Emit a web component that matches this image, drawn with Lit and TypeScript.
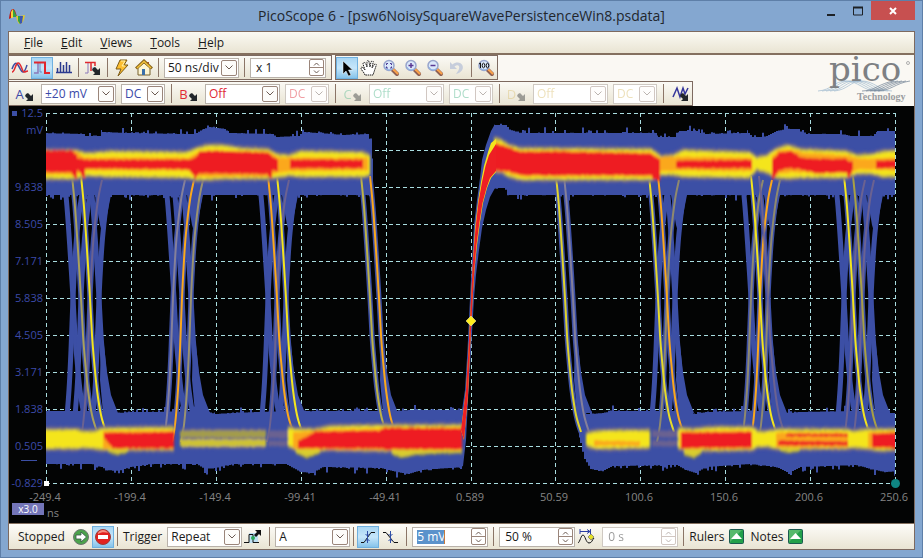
import { LitElement, html, svg, css, nothing } from "lit";
import { customElement } from "lit/decorators.js";
import { classMap } from "lit/directives/class-map.js";

type P = [number, number];
type Span = [number, number, number];

const BLUE = "#3c4fa5";
const MAUVE = "#6b6291";
const OLIVE = "#a9a044";
const YELLOW = "#f4e51d";
const ORANGE = "#fba81c";
const RED = "#ee1f24";

/* ---------- trace geometry ---------- */
const noise = (n: number) => {
  const v = Math.sin(n * 12.9898) * 43758.5453;
  return v - Math.floor(v);
};

const FALL: P[] = [[-12, 152], [-9, 176], [-6, 207], [-3, 250], [0, 298], [2, 335], [4, 360], [7, 390], [11, 415], [16, 432], [22, 441]];
const RISE: P[] = [[-10, 442], [-7, 425], [-4, 390], [-2, 350], [0, 298], [2, 260], [4, 233], [8, 200], [12, 180], [17, 166], [24, 157]];

const smooth = (pts: P[]) => {
  let d = `M${pts[0][0]} ${pts[0][1]}`;
  for (let i = 0; i < pts.length - 1; i++) {
    const a = pts[Math.max(0, i - 1)], b = pts[i], c = pts[i + 1], e = pts[Math.min(pts.length - 1, i + 2)];
    d += `C${b[0] + (c[0] - a[0]) / 6} ${b[1] + (c[1] - a[1]) / 6} ${c[0] - (e[0] - b[0]) / 6} ${c[1] - (e[1] - b[1]) / 6} ${c[0]} ${c[1]}`;
  }
  return d;
};
const edge = (shape: P[], mid: number) => smooth(shape.map(([x, y]) => [x + mid, y] as P));

const falls: [number, string?][] = [
  [73], [81, "#aaa15a"], [90, YELLOW], [99],
  [174], [182], [191],
  [268], [277, ORANGE], [286, YELLOW],
  [370, "#bdb347"], [379, ORANGE],
  [565, "#e0d42c"], [573, "#85809a"],
  [658, "#e6da2a"], [667, ORANGE], [675],
  [751], [760, YELLOW], [768, MAUVE],
  [844], [853, YELLOW], [862, OLIVE], [871],
];
const rises: [number, string?][] = [
  [73], [81], [90, MAUVE], [99],
  [173, "#85809a"], [182, ORANGE], [191, "#9a9270"],
  [268], [277, MAUVE], [286],
  [658], [667, "#8f896e"], [675],
  [751, "#8f896e"], [760, ORANGE], [768, "#8f896e"],
  [844], [853, MAUVE], [862, MAUVE], [871],
];

/* outermost trailing trace of each crossing, where the spread widens into the bands */
const lowerFlares = [99, 191, 286, 379, 573, 675, 768, 871];
const upperFlares = [99, 191, 286, 675, 768, 871];

/* the record runs a little past both ends of the visible area */
const beyond = (x: number) => (x === 46 ? 40 : x === 895 ? 902 : x);

const band = (pts: Span[], jitter: number, seed: number) => {
  const top: string[] = [], bot: string[] = [];
  for (let i = 0; i < pts.length - 1; i++) {
    const [t0, b0] = [pts[i][1], pts[i][2]], [t1, b1] = [pts[i + 1][1], pts[i + 1][2]];
    const x0 = beyond(pts[i][0]), x1 = beyond(pts[i + 1][0]);
    for (let x = x0; x < x1; x += 2) {
      const k = (x - x0) / (x1 - x0);
      const e = Math.min(x + 2, x1);
      const spike = jitter > 2 ? Math.pow(noise(x + seed), 9) * jitter * 2 : noise(x + seed) * jitter;
      const dip = jitter > 2 ? Math.pow(noise(x * 3 + seed), 9) * jitter * 2 : noise(x * 3 + seed) * jitter;
      const t = (t0 + (t1 - t0) * k - spike).toFixed(1), b = (b0 + (b1 - b0) * k + dip).toFixed(1);
      top.push(`${x} ${t}L${e} ${t}`);
      bot.unshift(`${e} ${b}L${x} ${b}`);
    }
  }
  return `M${top.join("L")}L${bot.join("L")}Z`;
};
const grow = (pts: Span[], n: number): Span[] => pts.map(([x, t, b]) => [x, t - n, b + n]);

const blueBands: Span[][] = [
  [[46, 133, 195], [83, 134, 195], [85, 136, 195], [99, 136, 195], [102, 132, 195], [125, 133, 195], [180, 134, 195], [194, 134, 195], [203, 129, 195], [209, 127, 195], [224, 129, 195], [229, 133, 195], [272, 134, 195], [276, 137, 195], [298, 136, 195], [302, 132, 195], [330, 134, 195], [342, 135, 195], [367, 134, 195], [370, 142, 195], [373, 170, 195]],
  [[494, 125, 188], [505, 125, 188], [507, 129, 195], [520, 133, 195], [570, 133, 195], [655, 133, 195], [658, 137, 195], [674, 137, 195], [679, 131, 195], [696, 131, 195], [701, 134, 195], [748, 133, 195], [752, 137, 195], [764, 137, 195], [776, 131, 195], [786, 129, 195], [798, 129, 195], [802, 134, 195], [840, 134, 195], [850, 136, 195], [872, 136, 195], [877, 131, 195], [895, 131, 195]],
  [[46, 411, 464], [92, 411, 464], [101, 411, 467], [106, 411, 470], [118, 413, 471], [130, 412, 467], [150, 412, 464], [196, 411, 464], [204, 411, 469], [215, 414, 468], [232, 413, 464], [285, 411, 464], [300, 413, 472], [312, 411, 473], [322, 411, 467], [380, 411, 468], [396, 411, 472], [408, 410, 474], [420, 410, 470], [462, 410, 467]],
  [[577, 412, 425], [580, 413, 443], [584, 414, 459], [590, 414, 469], [602, 413, 471], [612, 411, 466], [676, 411, 465], [685, 411, 470], [695, 414, 473], [705, 412, 467], [750, 411, 464], [776, 411, 467], [788, 413, 473], [800, 412, 467], [856, 411, 465], [870, 411, 469], [884, 413, 472], [895, 413, 471]],
];

const glowBands: Span[][] = [
  [[46, 152, 177], [75, 152, 177], [85, 155, 174], [110, 153, 175], [185, 154, 176], [196, 150, 178], [206, 147, 178], [222, 147, 177], [240, 150, 177], [267, 151, 177], [276, 156, 176], [288, 157, 174], [300, 153, 175], [362, 154, 175], [370, 158, 173]],
  [[494, 140, 170], [500, 142, 170], [508, 147, 175], [520, 150, 178], [650, 151, 178], [660, 158, 173], [672, 157, 173], [682, 152, 175], [748, 154, 176], [756, 159, 168], [766, 157, 171], [776, 150, 176], [787, 147, 177], [800, 151, 176], [845, 153, 176], [856, 157, 172], [870, 156, 172], [882, 153, 175], [895, 152, 175]],
  [[46, 431, 447], [76, 431, 447], [82, 433, 446], [94, 433, 447], [101, 430, 448], [174, 429, 448]],
  [[288, 429, 445], [295, 431, 448], [315, 431, 449], [330, 428, 448], [380, 427, 449], [392, 427, 449], [462, 427, 449]],
  [[586, 435, 444], [594, 433, 447], [610, 432, 447], [650, 432, 446]],
  [[678, 430, 447], [692, 431, 448], [710, 429, 449], [752, 429, 448], [757, 433, 445], [766, 433, 445], [776, 431, 447], [845, 431, 447], [852, 433, 446], [865, 431, 447], [880, 431, 449], [895, 431, 448]],
];

const tails: Span[][] = [
  [[108, 449, 450], [116, 449, 453], [128, 449, 450]],
  [[296, 449, 452], [306, 449, 456], [320, 449, 451]],
  [[392, 449, 453], [402, 449, 456], [415, 449, 453], [430, 449, 452], [462, 449, 451]],
  [[684, 449, 453], [693, 449, 456], [702, 449, 450]],
  [[780, 448, 449], [788, 448, 451], [800, 448, 449]],
];

const amberBands: Span[][] = [
  [[46, 152, 174], [74, 152, 174], [84, 158, 170], [110, 158, 170], [188, 158, 170], [198, 152, 176], [267, 152, 176], [277, 158, 172], [290, 158, 171], [365, 158, 170], [368, 160, 170]],
  [[494, 142, 170], [508, 148, 173], [520, 152, 176], [556, 151, 176], [650, 153, 176], [658, 158, 171], [680, 157, 170], [752, 158, 171]],
  [[772, 156, 178], [778, 151, 173], [790, 150, 172], [802, 153, 172], [848, 156, 172], [858, 159, 169], [872, 159, 169], [895, 158, 170]],
  [[103, 432, 448], [174, 431, 448]],
  [[293, 433, 448], [330, 430, 449], [462, 428, 449]],
  [[594, 441, 445], [640, 442, 445]],
  [[680, 432, 448], [750, 431, 448]],
  [[776, 433, 447], [848, 433, 447]],
  [[868, 433, 447], [895, 432, 448]],
];

const redBands: Span[][] = [
  [[46, 151, 172], [70, 151, 172], [75, 155, 178], [77, 158, 170], [83, 160, 178], [85, 160, 168], [188, 160, 169], [194, 158, 178], [199, 152, 173], [215, 151, 173], [266, 153, 174], [270, 155, 178], [272, 158, 170], [278, 160, 172]],
  [[290, 160, 168], [363, 160, 168]],
  [[494, 144, 170], [508, 148, 171], [520, 152, 175], [556, 152, 175], [650, 154, 175], [652, 156, 179], [659, 160, 180], [660, 163, 167]],
  [[676, 161, 168], [752, 160, 168]],
  [[772, 159, 179], [778, 153, 170], [790, 151, 168], [800, 158, 169], [815, 159, 173], [845, 159, 172], [848, 161, 177], [853, 162, 168]],
  [[876, 161, 168], [895, 160, 168]],
  [[104, 433, 439], [112, 433, 448], [130, 433, 448], [174, 432, 448]],
  [[298, 441, 448], [315, 432, 448], [378, 431, 448], [384, 428, 449], [462, 429, 449]],
  [[681, 433, 448], [752, 432, 447]],
  [[778, 441, 445], [848, 442, 445]],
  [[786, 434, 436], [848, 434, 436]],
  [[872, 434, 447], [895, 433, 448]],
];

const heatLayers: [string, string][] = [
  ...glowBands.map((b, i): [string, string] => [MAUVE, band(grow(b, 4), 1, i)]),
  ...tails.map((b, i): [string, string] => [OLIVE, band(b.map(([x, t, e]) => [x, t, e + 2] as Span), 1, i + 3)]),
  ...glowBands.map((b, i): [string, string] => [OLIVE, band(grow(b, 2), 1, i + 9)]),
  ...tails.map((b, i): [string, string] => ["#d9cd2e", band(b, 1, i)]),
  ...glowBands.map((b, i): [string, string] => [YELLOW, band(b, 1, i + 20)]),
  ...amberBands.map((b, i): [string, string] => [ORANGE, band(b, 1, i + 31)]),
  ...redBands.map((b, i): [string, string] => [RED, band(b, 1, i + 47)]),
];

const mainEdge: [string, string][] = [
  [BLUE, "M459 430L465 390L467.500 350L470 298L472 260L474 225L477 200L480 178L482 160L486 145L491 131L495 124V188L490 197L486 210L482 228L479 250L476 275L474 298L471 350L468 400L466 440L463 466L459 468Z"],
  [YELLOW, "M461 430L466 390L468.500 350L471 300L473 260L475 228L478 202L481 182L484 166L488 152L491 143L496 139V172L491 178L487 188L483 203L480 222L477 245L474.500 270L472.500 300L470 350L468 395L464 440Z"],
  [RED, "M461 430L466 390L468.500 350L471 300L473 260L475.500 228L478.500 202L482 182L485.500 166L489 155L496 144V171L490 178L486.500 188L482.500 203L479.500 222L476.500 245L474.300 270L472.500 300L470 350L468 395L464 440Z"],
];

const XS = [46, 131, 216, 301, 386, 471, 555, 640, 725, 810, 895];
const YS = Array.from({ length: 11 }, (_, i) => 113 + i * 37);
const X_LABELS = ["-249.4", "-199.4", "-149.4", "-99.41", "-49.41", "0.589", "50.59", "100.6", "150.6", "200.6", "250.6"];
const Y_LABELS = ["12.5", "", "9.838", "8.505", "7.171", "5.838", "4.505", "3.171", "1.838", "0.505", "-0.829"];

@customElement("scope-plot")
class ScopePlot extends LitElement {
  static styles = css`
    :host { display: block; flex: 1; min-height: 0; background: #030404; }
    svg { display: block; width: 100%; height: 100%; }
    .grid { stroke: #a9dde0; stroke-dasharray: 4 3; fill: none; }
    .edge { fill: none; stroke: #3c4fa5; stroke-width: 5; }
    .core { fill: none; stroke-width: 2; }
    .soft { filter: url(#soften); }
    text { font-family: "Open Sans", "Noto Sans", sans-serif; font-size: 11px; }
    .volts { fill: #3c4aa8; text-anchor: end; }
    .time { fill: #858585; text-anchor: middle; }
    .zoom { fill: #ffffff; font-size: 10px; text-anchor: middle; }
  `;
  render() {
    return html`
      <svg viewBox="9 106 905 417" role="img" aria-label="Persistence display">
        <defs>
          <filter id="soften" filterUnits="userSpaceOnUse" x="30" y="100" width="880" height="390"><feGaussianBlur stdDeviation="1 1.4" /></filter>
          <clipPath id="area"><rect x="46" y="106" width="849" height="377" /></clipPath>
        </defs>
        <g class="grid" shape-rendering="crispEdges">
          ${YS.map((y) => svg`<path d="M46 ${y + 0.5}H896" />`)}
          ${XS.map((x) => svg`<path d="M${x + 0.5} 113V484" />`)}
        </g>
        <g clip-path="url(#area)">
          ${falls.map(([m]) => svg`<path class="edge" d=${edge(FALL, m)} />`)}
          ${rises.map(([m]) => svg`<path class="edge" d=${edge(RISE, m)} />`)}
          ${lowerFlares.map((m) => svg`<path fill=${BLUE} d="M${m + 2} 335L${m + 5} 345L${m + 8} 372L${m + 12} 395L${m + 19} 413H${m + 4}L${m + 1} 380Z" />`)}
          ${upperFlares.map((m) => svg`<path fill=${BLUE} d="M${m + 1} 225L${m + 5} 238L${m + 8} 215L${m + 12} 195H${m - 4}Z" />`)}
          ${blueBands.map((b, i) => svg`<path fill=${BLUE} d=${band(b, 3, i * 7)} />`)}
          <path fill=${BLUE} d=${mainEdge[0][1]} />
          ${rises.map(([m, c]) => (c ? svg`<path class="core" stroke=${c} d=${edge(RISE.slice(0, 9), m)} />` : nothing))}
          ${falls.map(([m, c]) => (c ? svg`<path class="core" stroke=${c} d=${edge(FALL.slice(1, 10), m)} />` : nothing))}
          <g class="soft">
            <path fill=${MAUVE} d=${band([[182, 429, 448], [266, 429, 448]], 1, 5)} />
            <path fill="#a39c4c" d=${band([[180, 431, 437], [266, 431, 437]], 1, 5)} />
            <path fill="#cdc235" d=${band([[180, 440, 446], [266, 440, 446]], 1, 6)} />
            <path fill=${MAUVE} d=${band([[268, 431, 438], [290, 431, 438]], 1, 6)} />
            <path fill=${MAUVE} d=${band([[268, 441, 446], [290, 441, 446]], 1, 6)} />
            <path fill=${MAUVE} d=${band([[652, 431, 437], [680, 431, 437]], 1, 6)} />
            <path fill=${MAUVE} d=${band([[652, 441, 446], [680, 441, 446]], 1, 6)} />
            ${heatLayers.map(([c, d]) => svg`<path fill=${c} d=${d} />`)}
          </g>
          ${mainEdge.slice(1).map(([c, d]) => svg`<path fill=${c} d=${d} />`)}
        </g>
        <path d="M471 316L476 321L471 326L466 321Z" fill="#ffee1c" stroke="#fff8b0" stroke-width="0.500" />
        <rect x="12" y="111" width="5" height="5" fill="#3c4fa5" />
        <path d="M21 460.500H37" stroke="#3c4fa5" />
        <rect x="44" y="481" width="5" height="5" fill="#fff" />
        <circle cx="895.500" cy="483.500" r="4.500" fill="#0f8583" />
        ${Y_LABELS.map((t, i) => svg`<text class="volts" x="43" y=${YS[i] + 4}>${t}</text>`)}
        <text class="volts" x="43" y="134">mV</text>
        ${X_LABELS.map((t, i) => svg`<text class="time" x=${XS[i] - 1} y="501">${t}</text>`)}
        <text class="time" x="53" y="517">ns</text>
        <rect x="12" y="503" width="32" height="12" fill="#7375b8" />
        <text class="zoom" x="28" y="513">x3.0</text>
      </svg>`;
  }
}

/* ---------- icons ---------- */
const icon = (w: number, h: number, body: unknown) =>
  html`<svg class="icon" width=${w} height=${h} viewBox="0 0 ${w} ${h}" aria-hidden="true">${body}</svg>`;

const corner = (x: number, y: number) => svg`<path d="M${x} ${y + 1}l2-1 3 3 2-2v7h-7l2-2-3-3z" fill="#22262a" />`;
const magnifier = (glyph: unknown) => icon(18, 18, svg`
  <path d="M11 11L15 15" stroke="#8d5f52" stroke-width="4" stroke-linecap="round" />
  <path d="M11.500 10.500L15.500 14.500" stroke="#fba24a" stroke-width="2" stroke-linecap="round" />
  <circle cx="7" cy="6.500" r="5" fill="#dbe8fa" stroke="#98a5cc" stroke-width="1.500" />
  <path d="M3 8A4.500 4.500 0 0 0 10 10" fill="none" stroke="#8fb4e8" />${glyph}`);

const icons = {
  app: icon(18, 18, svg`
    <path d="M1 10C2 4 3 1 5 1C7 1 8 5 9 9H5L1 11Z" fill="#b91e1e" />
    <path d="M4 2L6 2L9 9H5Z" fill="#35a043" /><path d="M3 4L5 1V10H3Z" fill="#f5d43a" />
    <path d="M8 8H12L17 7C16 13 14 16 12 16C10 16 9 12 8 8Z" fill="#e2c92c" />
    <path d="M12 8L15 8L14 15L12 16Z" fill="#3a55b4" /><path d="M10 8H12V16L10 13Z" fill="#2d9d4c" />`),
  scope: icon(18, 16, svg`
    <path d="M1 9C3 3 5 2 7 5S10 12 12 12S15 8 16 5" fill="none" stroke="#3d4ca2" stroke-width="1.500" />
    <path d="M1 12C4 12 4 4 7 3S11 12 13 12S15 11 17 11" fill="none" stroke="#e0282e" stroke-width="1.500" />`),
  persist: icon(18, 16, svg`
    <path d="M1 13H5V3" fill="none" stroke="#8a79b8" stroke-width="1.500" /><path d="M7 3V12H9" fill="none" stroke="#6a8fc4" />
    <path d="M1 2.500H12V13H17" fill="none" stroke="#e0282e" stroke-width="2" />`),
  spectrum: icon(18, 16, svg`<path d="M1 12.500H17M2.500 12V8M5.500 12V2M8.500 12V5M11.500 12V2M14.500 12V5" stroke="#2b3a8f" stroke-width="1.500" fill="none" />`),
  lens: icon(18, 16, svg`<path d="M7 3V10H12V7H8Z" fill="#b9dcee" /><path d="M1 13H4V3" fill="none" stroke="#8a79b8" /><path d="M1 2.500H11V6M7 3V11" fill="none" stroke="#e0282e" stroke-width="1.500" />${corner(9, 7)}`),
  bolt: icon(16, 18, svg`<path d="M6 1H13L10 6H14L4 17L7 10H2Z" fill="#fdbe2f" stroke="#7b5a16" stroke-linejoin="round" /><path d="M7 2H11L8 7H11" fill="none" stroke="#fff0a8" />`),
  home: icon(18, 18, svg`
    <path d="M12 3V6H14V3Z" fill="#b0502c" /><path d="M3 9V16H15V9L9 4Z" fill="#fdf5d2" stroke="#77602c" />
    <path d="M1 9.500L9 2L17 9.500" fill="none" stroke="#8a661c" stroke-width="3" /><path d="M2 9L9 2.500L16 9" fill="none" stroke="#f4c33c" stroke-width="1.500" />
    <path d="M7 16V10H10V16Z" fill="#3b6fa8" />`),
  pointer: icon(16, 18, svg`<path d="M4 2V15L7 12L9.500 17L12 16L9.500 11H13.500Z" fill="#000" stroke="#fff" stroke-width="0.500" />`),
  hand: icon(18, 18, svg`<path d="M5 16C4 13 1 11 1 9S4 9 5 11L3 5C3 3 5 3 6 5L7 8L7 3C7 1 9 1 9 3L10 8L11 3C12 1 14 2 13 4L12 9L14 6C15 4 17 5 16 7L13 16Z" fill="#fff" stroke="#1a1a1a" stroke-dasharray="1.500 .7" />`),
  zoomBox: magnifier(svg`<path d="M6 4.500H4.500V6M4.500 7.500V9H6M8 4.500H9.500V6M9.500 7.500V9H8" fill="none" stroke="#4a3a94" />`),
  zoomIn: magnifier(svg`<path d="M4.500 6.500H9.500M7 4V9" stroke="#5a3a94" stroke-width="1.500" />`),
  zoomOut: magnifier(svg`<path d="M4.500 6.500H9.500" stroke="#5a3a94" stroke-width="1.500" />`),
  undo: icon(18, 18, svg`<path d="M2 3V10H9L6.500 7.500C10 5 12 7 11 10C10.500 12 9 13 8 15C13 14 16 10 14.500 6.500C13 3 8 2.500 4.500 5.500Z" fill="#c6cddb" />`),
  zoomFull: magnifier(svg`<path d="M2 5L3.500 4V9" fill="none" stroke="#111" /><ellipse cx="6.500" cy="6.500" rx="1.300" ry="2.300" fill="none" stroke="#111" /><ellipse cx="10.500" cy="6.500" rx="1.300" ry="2.300" fill="none" stroke="#111" />`),
  maths: icon(20, 18, svg`<path d="M2 12L6 3L9 12L12 3L14 9L17 3" fill="none" stroke="#33349a" stroke-width="1.500" />${corner(10, 8)}`),
  go: icon(18, 18, svg`<circle cx="9" cy="9" r="7.500" fill="#4ba34c" stroke="#6c7470" /><path d="M4 7H9V4L14.500 9L9 14V11H4Z" fill="#fff" stroke="#37534a" stroke-width="0.800" />`),
  stop: icon(18, 18, svg`<circle cx="9" cy="9" r="7.500" fill="#e2211f" stroke="#9c3c3a" /><path d="M4 5C6 1 12 1 14 5C11 4 7 4 4 6Z" fill="#f58f80" /><rect x="4" y="7" width="10" height="4" fill="#fff" />`),
  advanced: icon(20, 18, svg`<rect x="6" y="5" width="9" height="10" fill="#bfe0f2" /><path d="M1 14.500H6V6.500H10V14.500H16" fill="none" stroke="#111" /><circle cx="10" cy="10" r="2" fill="#2aa95a" /><path d="M11 7L14 4L12 2H18V8L16 6L13 9Z" fill="#111" />`),
  rising: icon(18, 18, svg`<path d="M2 14.500H5L12 4.500H16" fill="none" stroke="#111" /><path d="M8.500 3V15M6.500 6L8.500 8L10.500 6M6.500 13L8.500 11L10.500 13" fill="none" stroke="#2f4ea6" />`),
  falling: icon(18, 18, svg`<path d="M2 4.500H5L13 14.500H17" fill="none" stroke="#111" /><path d="M9.500 3V15M7.500 6L9.500 8L11.500 6M7.500 13L9.500 11L11.500 13" fill="none" stroke="#2f4ea6" />`),
  delay: icon(18, 18, svg`<path d="M1 15C3 14 4 7 6 7S9 15 12 15S15 12 17 10" fill="none" stroke="#111" /><path d="M3 3.500H13M3 1V6M13.500 1V6M10 1.500L13 3.500L10 5.500" fill="none" stroke="#2c3fa4" /><path d="M14 6L17 9L14 12L11 9Z" fill="#e6e224" stroke="#444" stroke-width="0.500" />`),
  up: icon(15, 15, svg`<rect x="0.500" y="0.500" width="14" height="14" rx="1" fill="#23a04b" stroke="#1c5b50" /><path d="M1 1H13L1 13Z" fill="#56b96b" /><path d="M2 10L7.500 4L13 10Z" fill="#fff" />`),
};

@customElement("app-root")
class AppRoot extends LitElement {
  static styles = css`
    :host { display: block; height: 100vh; font: 12px/16px "Open Sans", "Noto Sans", sans-serif; color: #1a1a1a; }
    * { box-sizing: border-box; }
    button, select, input { font: inherit; color: inherit; border: 0; padding: 0; margin: 0; background: none; border-radius: 0; }
    .icon { display: block; flex: none; }
    .window { height: 100%; display: flex; flex-direction: column; background: #84a7d0; border: 1px solid #5e7fa8; padding: 0 7px 7px; }
    .titlebar { height: 30px; display: grid; grid-template-columns: 1fr auto 1fr; align-items: start; }
    .titlebar .icon { margin-top: 7px; }
    .title { margin: 0; font-size: 14px; line-height: 30px; font-weight: 400; color: #22262c; }
    .caption { justify-self: end; display: flex; }
    .caption button { width: 27px; height: 19px; display: flex; justify-content: center; align-items: center; }
    .caption .close { width: 44px; background: #c75050; }
    .client { flex: 1; min-height: 0; display: flex; flex-direction: column; border: 1px solid #7d6a60; background: #faf8f3; }
    .menu { height: 23px; display: flex; align-items: center; gap: 18px; padding: 0 15px; background: linear-gradient(#fbfaf3, #e9e4d3); border-bottom: 2px solid #84705f; }
    .tools { height: 51px; flex: none; display: flex; justify-content: space-between; }
    .rows { display: flex; flex-direction: column; gap: 1px; }
    .row { display: flex; gap: 3px; height: 25px; }
    .bar { display: flex; align-items: center; height: 25px; border: 1px solid #7d6a60; border-left: 0; background: linear-gradient(#fbfaf5, #e9e4d3); }
    .bar + .bar { border-left: 1px solid #7d6a60; }
    .tool { width: 22px; height: 22px; flex: none; display: flex; align-items: center; justify-content: center; }
    .on { background: linear-gradient(#a9d6f3, #c6e6fa 50%, #86c3ea); border: 1px solid #6fb0df; }
    .sep { width: 1px; height: 19px; flex: none; background: #8b7567; margin: 0 5px; }
    .sep.tight { margin: 0 3px; }
    .sep.after { margin: 0 1px 0 6px; }
    .field { display: flex; align-items: center; height: 20px; flex: none; background: #fff; border: 1px solid #b9b2aa; padding-right: 1px; }
    .field select, .field input { flex: 1; min-width: 0; width: 0; height: 18px; padding-left: 3px; appearance: none; outline: none; opacity: 1; }
    .field.wide { width: 75px; }
    .field.spin { width: 76px; }
    .field.spin input { padding-left: 5px; }
    .field.small { width: 44px; }
    .arrow { width: 16px; height: 16px; flex: none; border: 1px solid #9a857a; border-radius: 2px; display: flex; align-items: center; justify-content: center; background: #fdfcfa; pointer-events: none; }
    .steps { width: 15px; height: 17px; flex: none; display: flex; flex-direction: column; border: 1px solid #9a857a; border-radius: 2px; }
    .steps button { flex: 1; display: flex; align-items: center; justify-content: center; }
    .steps button + button { border-top: 1px solid #9a857a; }
    .off { opacity: 0.4; }
    .field.off { opacity: 1; border-color: #cfc9c2; }
    .field.off > * { opacity: 0.45; }
    .chan { width: 32px; flex: none; height: 22px; display: flex; align-items: center; justify-content: center; font-size: 13px; }
    .chan .icon { margin-top: 6px; }
    .gap { width: 5px; flex: none; }
    .gap.slim { width: 2px; }
    .ch-a { color: #3a49a8; } .ch-b { color: #e02a35; } .ch-c { color: #4cb488; } .ch-d { color: #d8bd6a; }
    .logo { flex: none; width: 96px; height: 50px; margin-right: 2px; overflow: visible; }
    .brand { font-family: "DejaVu Serif", serif; font-size: 34px; fill: #7d8083; }
    .tech { font-family: "Liberation Serif", serif; font-size: 10px; font-weight: 700; fill: #9b9da0; }
    .status { height: 26px; flex: none; display: flex; align-items: center; border-top: 1px solid #84705f; background: linear-gradient(#fdfcf8, #e9e4d3); }
    .state { width: 61px; padding-left: 9px; }
    .label { padding: 0 5px 0 2px; }
    .note { display: flex; align-items: center; gap: 5px; margin-right: 6px; }
    .field .level { width: 28px; flex: none; height: 14px; margin-left: 4px; color: #fff; background: #5b92cb; border-right: 1px solid #c77b40; margin-right: auto; }
    .field.spin .level { padding-left: 0; }
  `;

  combo(name: string, value: string, size = "wide", tone = "", off = false) {
    return html`<label class=${classMap({ field: true, [size]: true, [tone || "plain"]: true, off })}>
      <select aria-label=${name} ?disabled=${off}><option>${value}</option></select>
      <span class="arrow"><svg width="8" height="5" viewBox="0 0 8 5"><path d="M0.500 0.500L4 4L7.500 0.500" fill="none" stroke="#6b5a52" /></svg></span>
    </label>`;
  }
  spin(name: string, value: string, off = false, selected = false) {
    return html`<div class=${classMap({ field: true, spin: true, off })}>
      <input class=${classMap({ level: selected })} aria-label=${name} .value=${value} ?disabled=${off} />
      <span class="steps">
        <button aria-label="Increase ${name}" ?disabled=${off}><svg width="7" height="4"><path d="M1 3.500L3.500 1L6 3.500" fill="none" stroke="#6b5a52" /></svg></button>
        <button aria-label="Decrease ${name}" ?disabled=${off}><svg width="7" height="4"><path d="M1 .5L3.500 3L6 .5" fill="none" stroke="#6b5a52" /></svg></button>
      </span>
    </div>`;
  }
  tool(name: string, pic: unknown, on = false) {
    return html`<button class=${classMap({ tool: true, on })} aria-label=${name}>${pic}</button>`;
  }
  channel(letter: string, range: string, off: boolean, dcOff: boolean) {
    const tone = "ch-" + letter.toLowerCase();
    return html`
      <button class="chan ${tone} ${off ? "off" : ""}" aria-label="Channel ${letter} options">${letter}${icon(11, 11, corner(2, 2))}</button>
      ${this.combo("Range " + letter, range, "wide", tone, off)}
      <span class="gap"></span>
      ${this.combo("Coupling " + letter, "DC", "small", tone, dcOff)}
      <span class="sep after"></span>`;
  }

  render() {
    const sep = html`<span class="sep"></span>`;
    const tight = html`<span class="sep tight"></span>`;
    return html`
      <div class="window">
        <header class="titlebar">
          ${icons.app}
          <h1 class="title">PicoScope 6 - [psw6NoisySquareWavePersistenceWin8.psdata]</h1>
          <div class="caption">
            <button aria-label="Minimize"><svg width="8" height="12"><rect y="9" width="8" height="2" fill="#1d2126" /></svg></button>
            <button aria-label="Maximize"><svg width="10" height="12"><path d="M.5 2.500H9.500V10H.5Z" fill="none" stroke="#1d2126" /><path d="M0 2.500H10" stroke="#1d2126" stroke-width="2" /></svg></button>
            <button class="close" aria-label="Close"><svg width="8" height="8"><path d="M1 1L7 7M7 1L1 7" stroke="#fff" stroke-width="2" /></svg></button>
          </div>
        </header>
        <main class="client">
          <nav class="menu">
            ${["File", "Edit", "Views", "Tools", "Help"].map((m) => html`<button><u>${m[0]}</u>${m.slice(1)}</button>`)}
          </nav>
          <div class="tools">
            <div class="rows">
              <div class="row">
                <div class="bar">
                  ${this.tool("Scope mode", icons.scope)}${this.tool("Persistence mode", icons.persist, true)}${this.tool("Spectrum mode", icons.spectrum)}
                  ${tight}${this.tool("Persistence options", icons.lens)}${tight}
                  ${this.tool("Auto setup", icons.bolt)}${this.tool("Home", icons.home)}${tight}
                  <span class="gap slim"></span>
                  ${this.combo("Timebase", "50 ns/div")}${sep}${this.spin("Zoom factor", "x 1")}
                  <span class="gap"></span>
                </div>
                <div class="bar">
                  ${this.tool("Select", icons.pointer, true)}${this.tool("Pan", icons.hand)}${this.tool("Marquee zoom", icons.zoomBox)}
                  ${this.tool("Zoom in", icons.zoomIn)}${this.tool("Zoom out", icons.zoomOut)}${this.tool("Undo zoom", icons.undo)}
                  ${tight}${this.tool("Zoom to full view", icons.zoomFull)}
                </div>
              </div>
              <div class="row">
                <div class="bar">
                  ${this.channel("A", "±20 mV", false, false)}
                  ${this.channel("B", "Off", false, true)}
                  ${this.channel("C", "Off", true, true)}
                  ${this.channel("D", "Off", true, true)}
                  <span class="gap"></span>
                  ${this.tool("Maths channels", icons.maths)}
                </div>
              </div>
            </div>
            <svg class="logo" viewBox="816 56 96 50" role="img" aria-label="Pico Technology">
              <g fill="none" stroke="#9db9cf" stroke-width="0.700">
                ${[0, 1, 2, 3, 4].map((i) => svg`<path d="M${818 + i * 4} 92C${832 + i * 4} 91 ${834 + i * 4} 82 ${846 + i * 4} 82S${864 + i * 4} 92 ${876 + i * 4} 92" />`)}
              </g>
              <g fill="none" stroke="#6f7f92" stroke-width="0.700">
                ${[0, 1, 2, 3, 4].map((i) => svg`<path d="M${862 + i * 4} 92C${874 + i * 4} 92 ${880 + i * 4} 84 ${894 + i * 4} 82" />`)}
              </g>
              <text class="brand" x="829" y="82">pico</text>
              <circle cx="908" cy="64" r="1.500" fill="none" stroke="#7d8083" stroke-width="0.600" />
              <text class="tech" x="857" y="101">Technology</text>
            </svg>
          </div>
          <scope-plot></scope-plot>
          <footer class="status">
            <span class="state">Stopped</span>
            ${this.tool("Start", icons.go)}${this.tool("Stop", icons.stop, true)}
            ${tight}<span class="label">Trigger</span>
            ${this.combo("Trigger mode", "Repeat")}
            ${this.tool("Advanced triggers", icons.advanced)}${sep}
            ${this.combo("Trigger source", "A")}
            ${tight}${this.tool("Rising edge", icons.rising, true)}${this.tool("Falling edge", icons.falling)}${sep}
            ${this.spin("Threshold", "5 mV", false, true)}${sep}
            ${this.spin("Pre-trigger", "50 %")}
            ${this.tool("Post-trigger delay", icons.delay)}
            <span class="gap"></span>
            ${this.spin("Delay", "0 s", true)}${sep}
            <label class="note">Rulers<button aria-label="Rulers">${icons.up}</button></label>
            <label class="note">Notes<button aria-label="Notes">${icons.up}</button></label>
          </footer>
        </main>
      </div>`;
  }
}
